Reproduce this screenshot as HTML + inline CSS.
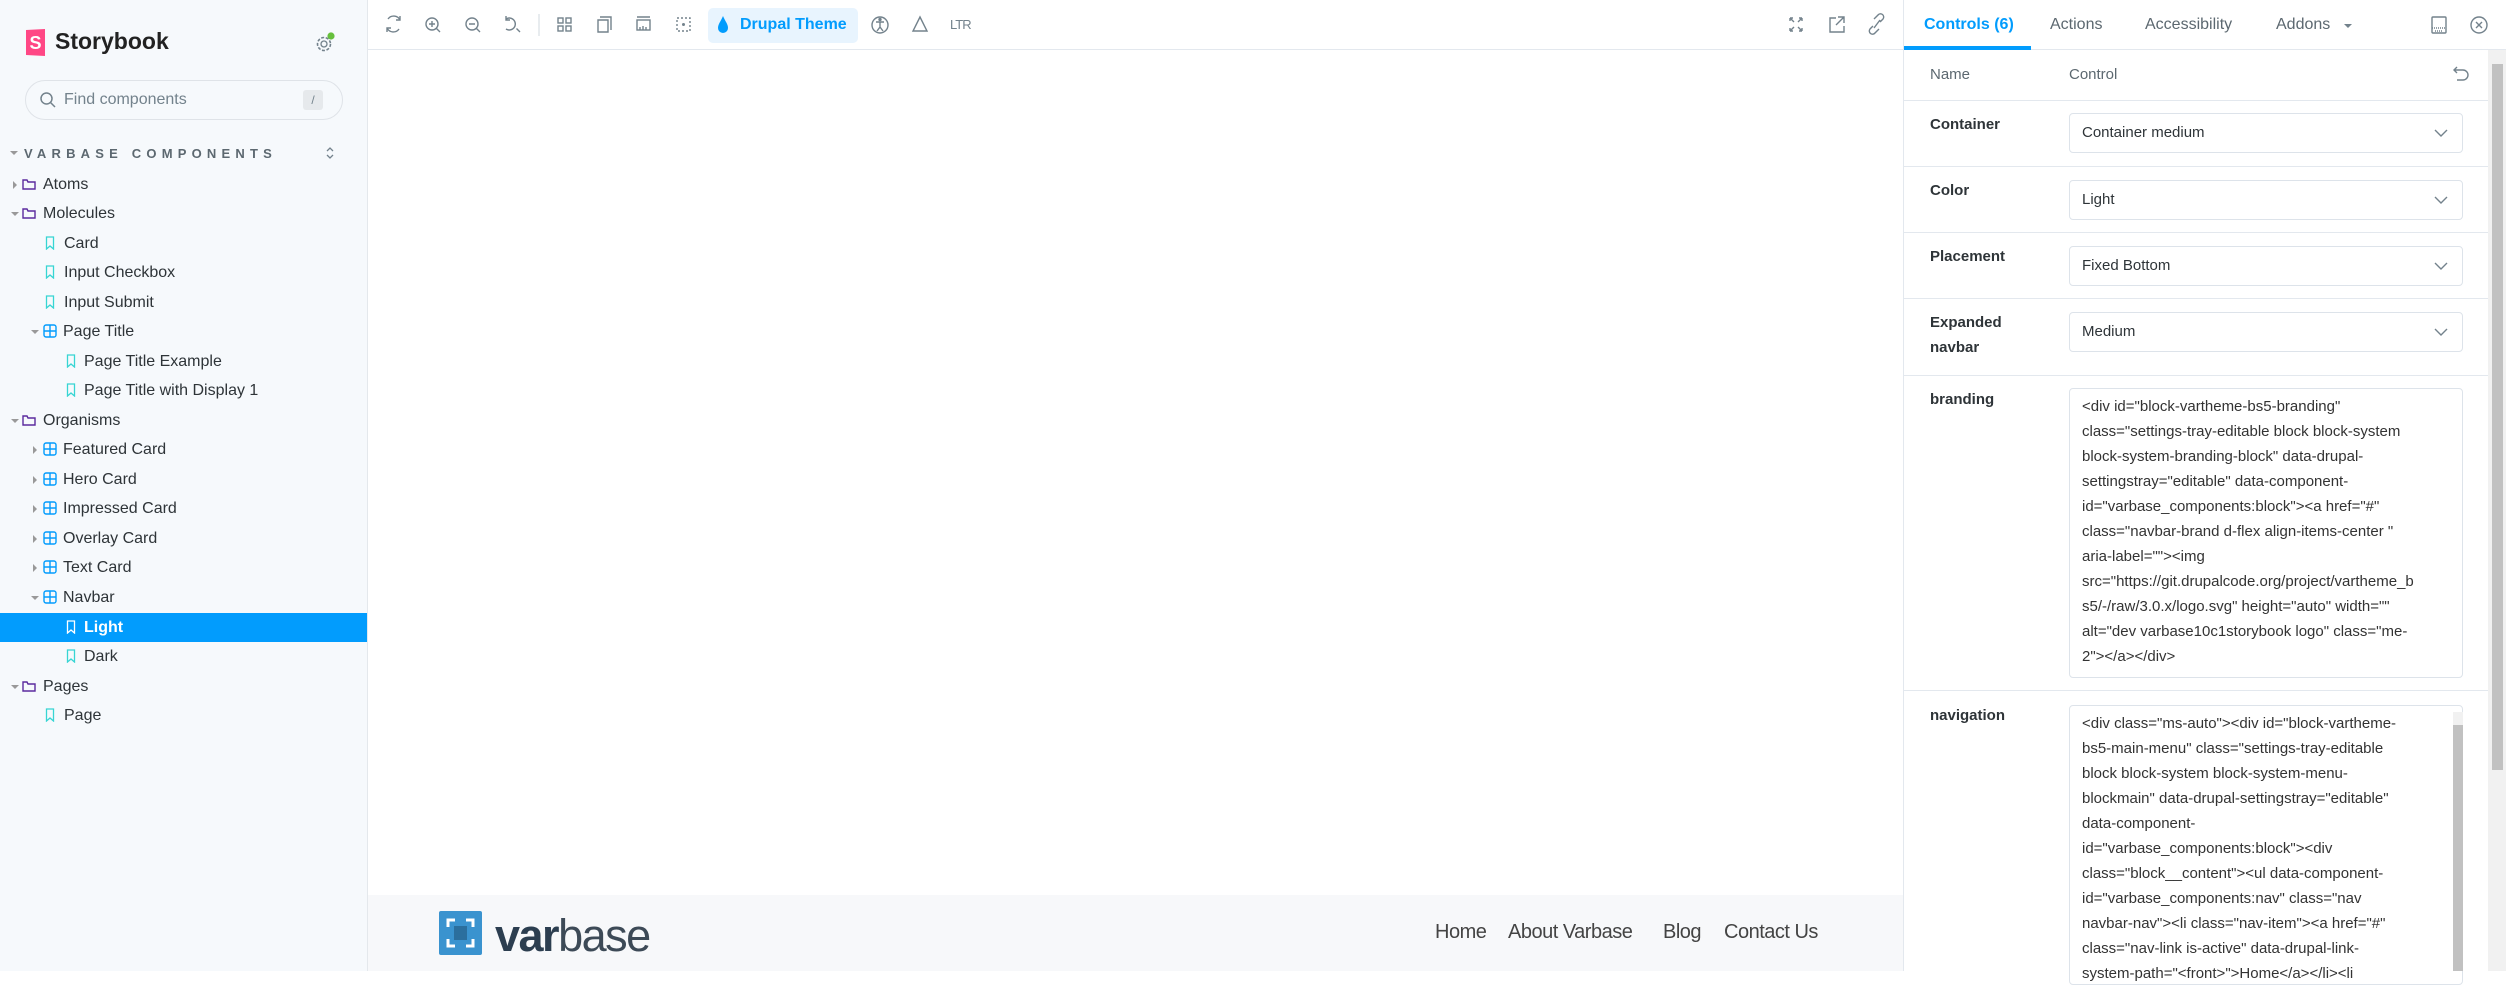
<!DOCTYPE html>
<html><head><meta charset="utf-8"><style>
*{box-sizing:border-box;margin:0;padding:0}
body{width:2506px;height:971px;overflow:hidden;position:relative;font-family:"Liberation Sans",sans-serif;background:#fff;color:#2e3438}
.a{position:absolute}
#side{left:0;top:0;width:368px;height:971px;background:#f6f9fc;border-right:1px solid #e4e8ec}
.row{position:absolute;left:0;width:367px;height:29px;font-size:16px;line-height:29px;color:#2e3438;white-space:nowrap}
.row span.t{position:absolute}
.arr{position:absolute;width:0;height:0}
.ad{border-left:4px solid transparent;border-right:4px solid transparent;border-top:4px solid #999;top:13px}
.ar{border-top:4px solid transparent;border-bottom:4px solid transparent;border-left:4px solid #999;top:11px}
.ic{position:absolute;top:7px}
.lbl{position:absolute;left:1930px;font-size:15px;font-weight:bold;color:#2e3438}
.sel{position:absolute;left:2069px;width:394px;height:40px;border:1px solid #dde3ea;border-radius:4px;font-size:15px;line-height:38px;padding-left:12px;color:#2e3438}
.sel svg{position:absolute;right:14px;top:14px}
.hr{position:absolute;left:1903px;width:585px;height:1px;background:#e3e8ee}
.ta{position:absolute;left:2069px;width:394px;border:1px solid #dde3ea;border-radius:4px;font-size:15px;line-height:25px;padding:5px 10px 0 12px;color:#333;overflow:hidden;white-space:nowrap}
.nav a{position:absolute;top:921px;font-size:20px;color:#444;text-decoration:none;letter-spacing:-0.5px}
</style></head><body>

<div id="side" class="a">
  <svg class="a" style="left:25px;top:29px" width="21" height="27" viewBox="0 0 21 27"><path d="M1 1 L20 0 L20 27 L1 26 Z" fill="#ff4785"/><text x="10.5" y="20" font-family="Liberation Sans" font-weight="bold" font-size="18" fill="#fff" text-anchor="middle">S</text></svg>
  <div class="a" style="left:55px;top:28px;font-size:23px;font-weight:bold;color:#222">Storybook</div>
  <svg class="a" style="left:313px;top:31px" width="24" height="24" viewBox="0 0 24 24"><circle cx="11" cy="13" r="6.5" fill="none" stroke="#73828c" stroke-width="1.6" stroke-dasharray="3 1.6"/><circle cx="11" cy="13" r="3" fill="none" stroke="#73828c" stroke-width="1.3"/><circle cx="18" cy="5" r="3.6" fill="#66bf3c"/></svg>
  <div class="a" style="left:25px;top:80px;width:318px;height:40px;border:1px solid #dfe3e8;border-radius:20px;background:#f6f9fc"></div>
  <svg class="a" style="left:39px;top:91px" width="18" height="18" viewBox="0 0 18 18"><circle cx="7.5" cy="7.5" r="5.5" fill="none" stroke="#73828c" stroke-width="1.5"/><path d="M11.5 11.5 L16 16" stroke="#73828c" stroke-width="1.5"/></svg>
  <div class="a" style="left:64px;top:91px;font-size:16px;color:#73828c">Find components</div>
  <div class="a" style="left:303px;top:90px;width:20px;height:20px;background:#e6e9ec;border-radius:3px;font-size:12px;color:#73828c;text-align:center;line-height:20px">/</div>
  <div class="arr ad" style="left:10px;top:151px"></div>
  <div class="a" style="left:24px;top:146px;font-size:13px;font-weight:bold;letter-spacing:5.2px;color:#5c6870">VARBASE COMPONENTS</div>
  <svg class="a" style="left:325px;top:145px" width="10" height="16" viewBox="0 0 10 16"><path d="M2 6 L5 3 L8 6 M2 10 L5 13 L8 10" fill="none" stroke="#73828c" stroke-width="1.3"/></svg>

  <div class="row" style="top:170px"><div class="arr ar" style="left:13px"></div><svg class="ic" style="left:22px" width="14" height="14"><path d="M1 3 H5 L6 5 H13 V12 H1 Z" fill="none" stroke="#5b2b9e" stroke-width="1.4"/></svg><span class="t" style="left:43px">Atoms</span></div>
  <div class="row" style="top:199px"><div class="arr ad" style="left:11px"></div><svg class="ic" style="left:22px" width="14" height="14"><path d="M1 3 H5 L6 5 H13 V12 H1 Z" fill="none" stroke="#5b2b9e" stroke-width="1.4"/></svg><span class="t" style="left:43px">Molecules</span></div>
  <div class="row" style="top:229px"><svg class="ic" style="left:45px" width="10" height="14"><path d="M1.5 1 H8.5 V13 L5 10 L1.5 13 Z" fill="none" stroke="#37d5d3" stroke-width="1.3"/></svg><span class="t" style="left:64px">Card</span></div>
  <div class="row" style="top:258px"><svg class="ic" style="left:45px" width="10" height="14"><path d="M1.5 1 H8.5 V13 L5 10 L1.5 13 Z" fill="none" stroke="#37d5d3" stroke-width="1.3"/></svg><span class="t" style="left:64px">Input Checkbox</span></div>
  <div class="row" style="top:288px"><svg class="ic" style="left:45px" width="10" height="14"><path d="M1.5 1 H8.5 V13 L5 10 L1.5 13 Z" fill="none" stroke="#37d5d3" stroke-width="1.3"/></svg><span class="t" style="left:64px">Input Submit</span></div>
  <div class="row" style="top:317px"><div class="arr ad" style="left:31px"></div><svg class="ic" style="left:43px" width="14" height="14"><rect x="1" y="1" width="12" height="12" rx="2" fill="none" stroke="#029cfd" stroke-width="1.4"/><path d="M7 1 V13 M1 7 H13" stroke="#029cfd" stroke-width="1.4"/></svg><span class="t" style="left:63px">Page Title</span></div>
  <div class="row" style="top:347px"><svg class="ic" style="left:66px" width="10" height="14"><path d="M1.5 1 H8.5 V13 L5 10 L1.5 13 Z" fill="none" stroke="#37d5d3" stroke-width="1.3"/></svg><span class="t" style="left:84px">Page Title Example</span></div>
  <div class="row" style="top:376px"><svg class="ic" style="left:66px" width="10" height="14"><path d="M1.5 1 H8.5 V13 L5 10 L1.5 13 Z" fill="none" stroke="#37d5d3" stroke-width="1.3"/></svg><span class="t" style="left:84px">Page Title with Display 1</span></div>
  <div class="row" style="top:406px"><div class="arr ad" style="left:11px"></div><svg class="ic" style="left:22px" width="14" height="14"><path d="M1 3 H5 L6 5 H13 V12 H1 Z" fill="none" stroke="#5b2b9e" stroke-width="1.4"/></svg><span class="t" style="left:43px">Organisms</span></div>
  <div class="row" style="top:435px"><div class="arr ar" style="left:33px"></div><svg class="ic" style="left:43px" width="14" height="14"><rect x="1" y="1" width="12" height="12" rx="2" fill="none" stroke="#029cfd" stroke-width="1.4"/><path d="M7 1 V13 M1 7 H13" stroke="#029cfd" stroke-width="1.4"/></svg><span class="t" style="left:63px">Featured Card</span></div>
  <div class="row" style="top:465px"><div class="arr ar" style="left:33px"></div><svg class="ic" style="left:43px" width="14" height="14"><rect x="1" y="1" width="12" height="12" rx="2" fill="none" stroke="#029cfd" stroke-width="1.4"/><path d="M7 1 V13 M1 7 H13" stroke="#029cfd" stroke-width="1.4"/></svg><span class="t" style="left:63px">Hero Card</span></div>
  <div class="row" style="top:494px"><div class="arr ar" style="left:33px"></div><svg class="ic" style="left:43px" width="14" height="14"><rect x="1" y="1" width="12" height="12" rx="2" fill="none" stroke="#029cfd" stroke-width="1.4"/><path d="M7 1 V13 M1 7 H13" stroke="#029cfd" stroke-width="1.4"/></svg><span class="t" style="left:63px">Impressed Card</span></div>
  <div class="row" style="top:524px"><div class="arr ar" style="left:33px"></div><svg class="ic" style="left:43px" width="14" height="14"><rect x="1" y="1" width="12" height="12" rx="2" fill="none" stroke="#029cfd" stroke-width="1.4"/><path d="M7 1 V13 M1 7 H13" stroke="#029cfd" stroke-width="1.4"/></svg><span class="t" style="left:63px">Overlay Card</span></div>
  <div class="row" style="top:553px"><div class="arr ar" style="left:33px"></div><svg class="ic" style="left:43px" width="14" height="14"><rect x="1" y="1" width="12" height="12" rx="2" fill="none" stroke="#029cfd" stroke-width="1.4"/><path d="M7 1 V13 M1 7 H13" stroke="#029cfd" stroke-width="1.4"/></svg><span class="t" style="left:63px">Text Card</span></div>
  <div class="row" style="top:583px"><div class="arr ad" style="left:31px"></div><svg class="ic" style="left:43px" width="14" height="14"><rect x="1" y="1" width="12" height="12" rx="2" fill="none" stroke="#029cfd" stroke-width="1.4"/><path d="M7 1 V13 M1 7 H13" stroke="#029cfd" stroke-width="1.4"/></svg><span class="t" style="left:63px">Navbar</span></div>
  <div class="row" style="top:613px;background:#029cfd;color:#fff;font-weight:bold"><svg class="ic" style="left:66px" width="10" height="14"><path d="M1.5 1 H8.5 V13 L5 10 L1.5 13 Z" fill="none" stroke="#fff" stroke-width="1.3"/></svg><span class="t" style="left:84px">Light</span></div>
  <div class="row" style="top:642px"><svg class="ic" style="left:66px" width="10" height="14"><path d="M1.5 1 H8.5 V13 L5 10 L1.5 13 Z" fill="none" stroke="#37d5d3" stroke-width="1.3"/></svg><span class="t" style="left:84px">Dark</span></div>
  <div class="row" style="top:672px"><div class="arr ad" style="left:11px"></div><svg class="ic" style="left:22px" width="14" height="14"><path d="M1 3 H5 L6 5 H13 V12 H1 Z" fill="none" stroke="#5b2b9e" stroke-width="1.4"/></svg><span class="t" style="left:43px">Pages</span></div>
  <div class="row" style="top:701px"><svg class="ic" style="left:45px" width="10" height="14"><path d="M1.5 1 H8.5 V13 L5 10 L1.5 13 Z" fill="none" stroke="#37d5d3" stroke-width="1.3"/></svg><span class="t" style="left:64px">Page</span></div>
</div>

<!-- toolbar -->
<div class="a" style="left:368px;top:49px;width:2138px;height:1px;background:#e3e8ee"></div>
<svg class="a" style="left:368px;top:0" width="640" height="49" viewBox="368 0 640 49" fill="none" stroke="#73828c" stroke-width="1.4">
  <path d="M388 19 A7 7 0 0 1 400 20 M400 16 V20 H396 M399 29 A7 7 0 0 1 387 28 M387 32 V28 H391"/>
  <circle cx="432" cy="24" r="6"/><path d="M436.5 28.5 L440 32 M432 21 V27 M429 24 H435"/>
  <circle cx="472" cy="24" r="6"/><path d="M476.5 28.5 L480 32 M469 24 H475"/>
  <path d="M506 19 A6 6 0 1 1 506 29 M506 16 V20 H510 M516.5 28.5 L520 32"/>
  <path d="M539 14 V36" stroke="#dfe3e8"/>
  <rect x="558" y="18" width="5" height="5"/><rect x="566" y="18" width="5" height="5"/><rect x="558" y="26" width="5" height="5"/><rect x="566" y="26" width="5" height="5"/>
  <path d="M598 20 H608 V32 H598 Z M600 17 H611 V30"/>
  <rect x="637" y="20" width="13" height="10"/><path d="M637 17 H650 M640 27 V30 M643 26 V30 M646 27 V30"/>
  <rect x="677" y="18" width="13" height="13" stroke-dasharray="2 2"/><circle cx="683.5" cy="24.5" r="0.8" fill="#73828c"/>
  <circle cx="880" cy="25" r="8"/><path d="M876 22 H884 M880 22 V27 L877 31 M880 27 L883 31"/><circle cx="880" cy="19.5" r="1" fill="#73828c"/>
  <path d="M920 17 L913 31 H927 Z"/>
</svg>
<div class="a" style="left:708px;top:8px;width:150px;height:35px;background:#e8f4fe;border-radius:5px"></div>
<svg class="a" style="left:717px;top:15px" width="12" height="20" viewBox="0 0 12 20"><path d="M6 1 C8 6 11 9 11 13 A5 5 0 0 1 1 13 C1 9 4 6 6 1 Z" fill="#029cfd"/></svg>
<div class="a" style="left:740px;top:16px;font-size:16px;font-weight:bold;color:#029cfd">Drupal Theme</div>
<div class="a" style="left:950px;top:17px;font-size:13px;color:#73828c;letter-spacing:-1px">LTR</div>
<svg class="a" style="left:1780px;top:0" width="110" height="49" viewBox="1780 0 110 49" fill="none" stroke="#73828c" stroke-width="1.4">
  <path d="M1790 18 L1794 22 M1802 18 L1798 22 M1790 31 L1794 27 M1802 31 L1798 27 M1790 18 V21 M1790 18 H1793 M1802 18 V21 M1802 18 H1799 M1790 31 V28 M1790 31 H1793 M1802 31 V28 M1802 31 H1799"/>
  <path d="M1836 18 H1830 V32 H1844 V26 M1838 17 H1844 V23 M1844 17 L1836 25"/>
  <path d="M1873 26 L1870 29 A3 3 0 0 0 1875 33 L1879 29 M1880 22 L1883 19 A3 3 0 0 0 1878 15 L1874 19 M1874 28 L1880 20"/>
</svg>

<!-- panel -->
<div class="a" style="left:1903px;top:0;width:1px;height:971px;background:#e3e8ee"></div>
<div class="a" style="left:1924px;top:16px;font-size:16px;font-weight:bold;color:#029cfd">Controls (6)</div>
<div class="a" style="left:1904px;top:46px;width:127px;height:4px;background:#029cfd"></div>
<div class="a" style="left:2050px;top:16px;font-size:16px;color:#5c6870">Actions</div>
<div class="a" style="left:2145px;top:16px;font-size:16px;color:#5c6870">Accessibility</div>
<div class="a" style="left:2276px;top:16px;font-size:16px;color:#5c6870">Addons</div>
<div class="arr" style="left:2344px;top:24px;border-left:4px solid transparent;border-right:4px solid transparent;border-top:4px solid #73828c;position:absolute"></div>
<svg class="a" style="left:2428px;top:14px" width="70" height="22" viewBox="2428 14 70 22" fill="none" stroke="#73828c" stroke-width="1.4">
  <rect x="2432" y="17" width="14" height="16" rx="1"/><path d="M2432 28 H2446 M2435 31 H2443" stroke-dasharray="1 1"/>
  <circle cx="2479" cy="25" r="8"/><path d="M2476 22 L2482 28 M2482 22 L2476 28"/>
</svg>
<div class="a" style="left:1930px;top:66px;font-size:15px;color:#5c6870">Name</div>
<div class="a" style="left:2069px;top:66px;font-size:15px;color:#5c6870">Control</div>
<svg class="a" style="left:2452px;top:64px" width="18" height="20" viewBox="0 0 18 20" fill="none" stroke="#73828c" stroke-width="1.4"><path d="M5 3 L2 6 L5 9 M2 6 H11 A5 5 0 0 1 11 16 H5"/></svg>
<div class="hr" style="top:100px"></div>
<div class="hr" style="top:166px"></div>
<div class="hr" style="top:232px"></div>
<div class="hr" style="top:298px"></div>
<div class="hr" style="top:375px"></div>
<div class="hr" style="top:690px"></div>
<div class="lbl" style="top:116px">Container</div>
<div class="lbl" style="top:182px">Color</div>
<div class="lbl" style="top:248px">Placement</div>
<div class="lbl" style="top:314px">Expanded</div>
<div class="lbl" style="top:339px">navbar</div>
<div class="lbl" style="top:391px">branding</div>
<div class="lbl" style="top:707px">navigation</div>
<div class="sel" style="top:113px">Container medium<svg width="14" height="10"><path d="M1 2 L7 8 L13 2" fill="none" stroke="#73828c" stroke-width="1.4"/></svg></div>
<div class="sel" style="top:180px">Light<svg width="14" height="10"><path d="M1 2 L7 8 L13 2" fill="none" stroke="#73828c" stroke-width="1.4"/></svg></div>
<div class="sel" style="top:246px">Fixed Bottom<svg width="14" height="10"><path d="M1 2 L7 8 L13 2" fill="none" stroke="#73828c" stroke-width="1.4"/></svg></div>
<div class="sel" style="top:312px">Medium<svg width="14" height="10"><path d="M1 2 L7 8 L13 2" fill="none" stroke="#73828c" stroke-width="1.4"/></svg></div>
<div class="ta" style="top:388px;height:290px">&lt;div id="block-vartheme-bs5-branding"<br>class="settings-tray-editable block block-system<br>block-system-branding-block" data-drupal-<br>settingstray="editable" data-component-<br>id="varbase_components:block"&gt;&lt;a href="#"<br>class="navbar-brand d-flex align-items-center "<br>aria-label=""&gt;&lt;img<br>src="https://git.drupalcode.org/project/vartheme_b<br>s5/-/raw/3.0.x/logo.svg" height="auto" width=""<br>alt="dev varbase10c1storybook logo" class="me-<br>2"&gt;&lt;/a&gt;&lt;/div&gt;</div>
<div class="ta" style="top:705px;height:280px;padding-right:26px">&lt;div class="ms-auto"&gt;&lt;div id="block-vartheme-<br>bs5-main-menu" class="settings-tray-editable<br>block block-system block-system-menu-<br>blockmain" data-drupal-settingstray="editable"<br>data-component-<br>id="varbase_components:block"&gt;&lt;div<br>class="block__content"&gt;&lt;ul data-component-<br>id="varbase_components:nav" class="nav<br>navbar-nav"&gt;&lt;li class="nav-item"&gt;&lt;a href="#"<br>class="nav-link is-active" data-drupal-link-<br>system-path="&lt;front&gt;"&gt;Home&lt;/a&gt;&lt;/li&gt;&lt;li</div>
<div class="a" style="left:2453px;top:712px;width:10px;height:259px;background:#f1f1f1"></div>
<div class="a" style="left:2453px;top:725px;width:10px;height:246px;background:#c1c1c1"></div>
<div class="a" style="left:2488px;top:50px;width:18px;height:921px;background:#f1f1f1"></div>
<div class="a" style="left:2492px;top:64px;width:11px;height:706px;background:#c1c1c1"></div>

<!-- preview footer -->
<div class="a" style="left:368px;top:895px;width:1535px;height:76px;background:#f7f8fa"></div>
<div class="a" style="left:439px;top:911px;width:43px;height:44px;background:#3a93cf;border-radius:2px"></div>
<svg class="a" style="left:439px;top:911px" width="43" height="44" viewBox="0 0 43 44" fill="none" stroke="#fff" stroke-width="3"><path d="M9 16 V9 H16 M27 9 H34 V16 M34 28 V35 H27 M16 35 H9 V28"/><rect x="15" y="15" width="13" height="14" fill="#2b6f9e" stroke="none"/></svg>
<div class="a" style="left:495px;top:913px;font-size:45px;line-height:45px;letter-spacing:-1.5px;color:#2c3e50"><b>var</b><span style="font-weight:normal;color:#3d4a57">base</span></div>
<div class="nav"><a style="left:1435px">Home</a><a style="left:1508px">About Varbase</a><a style="left:1663px">Blog</a><a style="left:1724px">Contact Us</a></div>
</body></html>
